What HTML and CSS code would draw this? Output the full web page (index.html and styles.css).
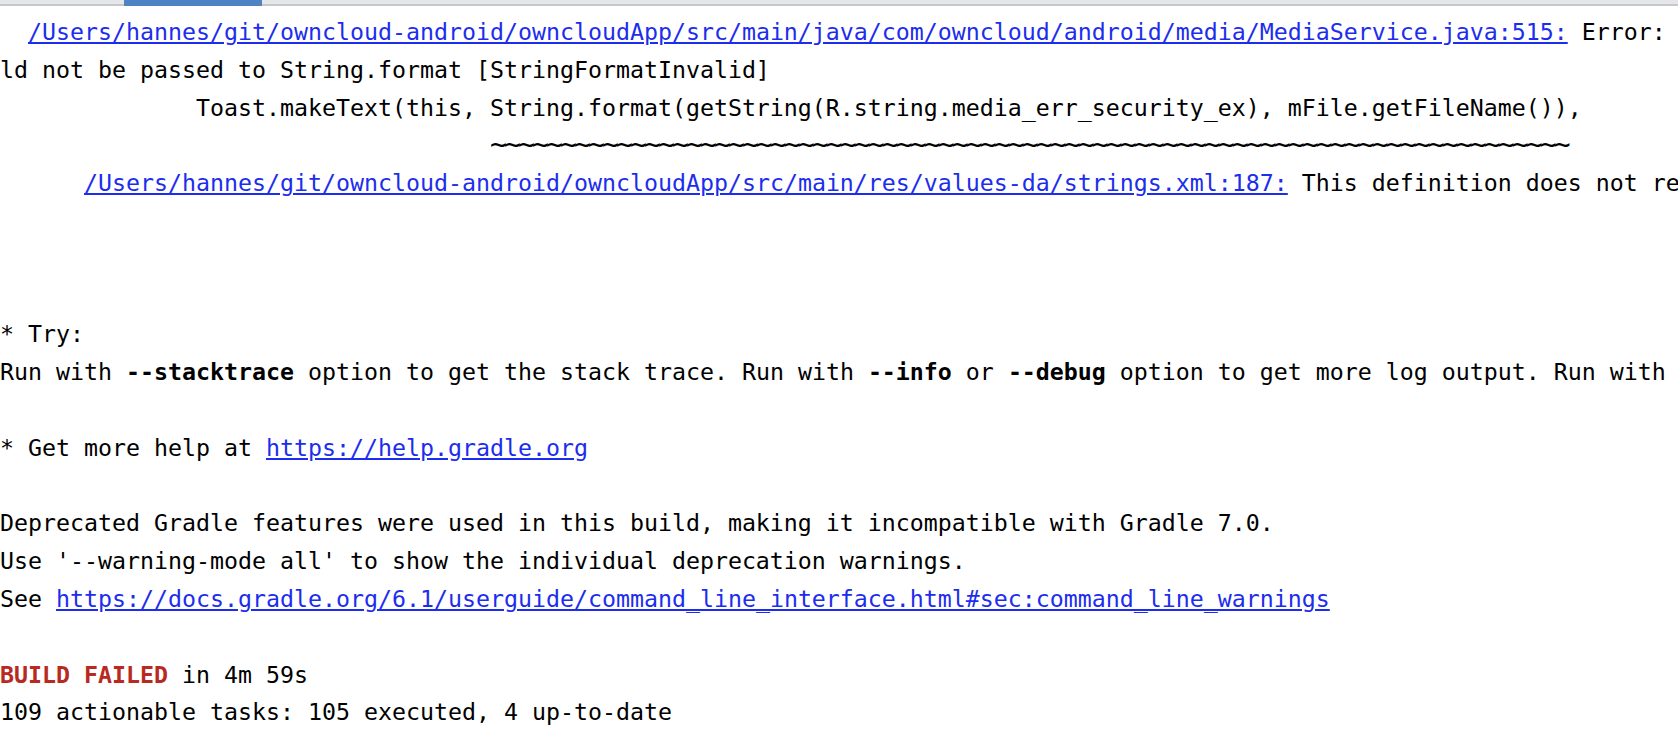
FILE: index.html
```html
<!DOCTYPE html>
<html>
<head>
<meta charset="utf-8">
<link rel="stylesheet" href="styles.css">
</head>
<body>
<div class="tabbar"><div class="tab"></div></div>
<div class="console">
<div class="line">  <a class="link" href="#">/Users/hannes/git/owncloud-android/owncloudApp/src/main/java/com/owncloud/android/media/MediaService.java:515:</a> Error: Format string 'media_err_security_ex' is not a valid format string so it shou</div>
<div class="line">ld not be passed to String.format [StringFormatInvalid]</div>
<div class="line">              Toast.makeText(this, String.format(getString(R.string.media_err_security_ex), mFile.getFileName()),</div>
<div class="line">                                   <span class="wave">~~~~~~~~~~~~~~~~~~~~~~~~~~~~~~~~~~~~~~~~~~~~~~~~~~~~~~~~~~~~~~~~~~~~~~~~~~~~~</span></div>
<div class="line">      <a class="link" href="#">/Users/hannes/git/owncloud-android/owncloudApp/src/main/res/values-da/strings.xml:187:</a> This definition does not require arguments</div>
<div class="line"> </div>
<div class="line"> </div>
<div class="line"> </div>
<div class="line">* Try:</div>
<div class="line">Run with <b>--stacktrace</b> option to get the stack trace. Run with <b>--info</b> or <b>--debug</b> option to get more log output. Run with <b>--scan</b> to get full insights.</div>
<div class="line"> </div>
<div class="line">* Get more help at <a class="link" href="#">https://help.gradle.org</a></div>
<div class="line"> </div>
<div class="line">Deprecated Gradle features were used in this build, making it incompatible with Gradle 7.0.</div>
<div class="line">Use '--warning-mode all' to show the individual deprecation warnings.</div>
<div class="line">See <a class="link" href="#">https://docs.gradle.org/6.1/userguide/command_line_interface.html#sec:command_line_warnings</a></div>
<div class="line"> </div>
<div class="line"><b class="fail">BUILD FAILED</b> in 4m 59s</div>
<div class="line">109 actionable tasks: 105 executed, 4 up-to-date</div>
</div>
</body>
</html>
```
FILE: styles.css
```css
html, body {
  margin: 0;
  padding: 0;
  background: #ffffff;
  overflow: hidden;
}
body {
  width: 1678px;
  height: 732px;
}
.tabbar {
  height: 4px;
  background: #e5e6e9;
  border-bottom: 2px solid #c7c8ca;
  position: relative;
}
.tab {
  position: absolute;
  left: 124px;
  top: 0;
  width: 138px;
  height: 6px;
  background: #4f84c4;
}
.console {
  padding-top: 7px;
  font-family: "DejaVu Sans Mono", monospace;
  font-size: 23.25px;
  line-height: 37.8px;
  color: #000000;
  overflow: hidden;
}
.line {
  white-space: pre;
  height: 37.8px;
  overflow: visible;
}
.wave {
  font-size: 28px;
  letter-spacing: -2.86px;
  line-height: 1;
  position: relative;
  top: 1px;
}
.link {
  color: #1c2ded;
  text-decoration: underline;
}
b {
  font-weight: bold;
}
.fail {
  color: #b8291f;
}
```
